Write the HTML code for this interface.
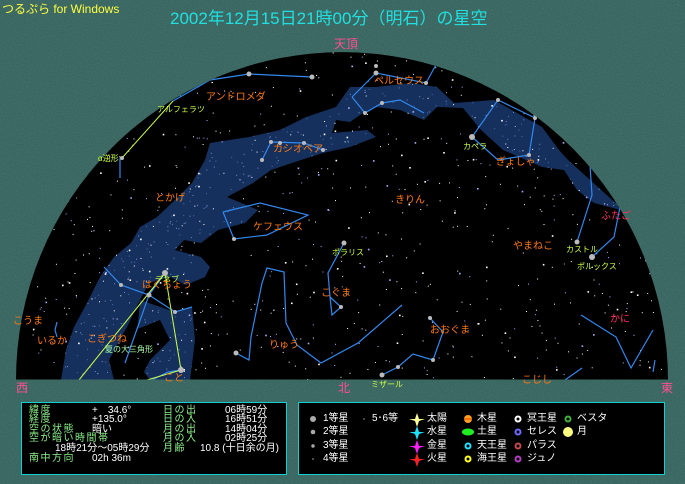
<!DOCTYPE html>
<html><head><meta charset="utf-8">
<style>
html,body{margin:0;padding:0;}
body{width:685px;height:484px;background:#335c54;position:relative;overflow:hidden;font-family:"Liberation Sans","Noto Sans CJK JP",sans-serif;}
.t{position:absolute;white-space:nowrap;line-height:1;}
.panel{position:absolute;background:#000;border:1px solid #10d0d0;box-sizing:border-box;}
.g{color:#8cf08c;letter-spacing:1.5px;}
.w{color:#fff;}
.p{position:absolute;font-size:10px;white-space:nowrap;line-height:1;}
.q{position:absolute;font-size:10px;white-space:nowrap;line-height:1;color:#fff;}
</style></head><body>
<svg width="685" height="484" style="position:absolute;left:0;top:0">
<defs>
<clipPath id="dome"><path d="M16 380 A326 328 0 0 1 668 380 Z"/></clipPath>
<clipPath id="mw"><path id="mwp" d="M620 207 L568 160 L559 150 L542 127 L494 100 L454 103 L437 87 L411 83 L376 87 L350 87 L336 107 L306 117 L280 130 L249 137 L210 143 L205 160 L192 183 L175 200 L157 217 L140 227 L131 243 L114 257 L100 277 L87 303 L74 327 L66 350 L61 380 L114 380 L109 360 L118 343 L127 327 L140 300 L149 283 L170 277 L186 285 L205 277 L210 267 L201 257 L175 250 L184 240 L201 243 L218 230 L245 223 L258 210 L227 197 L253 183 L271 170 L301 160 L323 153 L350 147 L376 137 L367 130 L332 133 L336 120 L350 122 L363 113 L376 107 L400 110 L424 120 L437 107 L463 108 L481 130 L503 150 L542 167 L564 170 L577 190 L594 203 L640 215 Z M140 300 L175 312 L192 307 L195 340 L190 380 L150 380 L135 360 Z"/></clipPath>
<filter id="nz"><feTurbulence type="fractalNoise" baseFrequency="0.9" numOctaves="1" seed="3"/><feColorMatrix values="0 0 0 0 0.15  0 0 0 0 0.38  0 0 0 0 0.42  0 0 0 0.35 0"/></filter>
</defs>
<rect width="685" height="484" filter="url(#nz)"/>
<path d="M16 380 A326 328 0 0 1 668 380 Z" fill="#000"/>
<g clip-path="url(#dome)">
<g clip-path="url(#mw)"><rect x="0" y="0" width="685" height="400" fill="#15305c"/><g id="mwstars"></g></g>
<path fill="#000" d="M135 330 L160 320 L170 340 L150 360 L140 380 L128 380 Z"/>
<g id="stars"></g>
<g stroke="#3388ee" stroke-width="1.2" fill="none">
<polyline points="173,101 210,80 249,74 312,77"/>
<polyline points="120,158 120,178"/>
<polyline points="437,63 426,83 376,73 352,97"/>
<polyline points="352,97 365,113 382,103 400,100 424,113"/>
<polyline points="472,137 498,100 535,118 529,155 498,160 472,137"/>
<polyline points="262,160 271,142 304,143 323,150"/>
<polyline points="223,212 260,203 308,215 267,235 234,239 223,212"/>
<polyline points="344,243 328,273 330,297 332,315 341,307 330,297"/>
<polyline points="236,353 249,360 251,337 262,283 267,268 284,272 286,323 297,345 321,363 358,343 402,305"/>
<polyline points="430,318 443,332 433,360 413,354 398,367 382,375"/>
<polyline points="590,165 592,195 577,242"/>
<polyline points="592,257 614,237 620,207"/>
<polyline points="581,315 616,337 631,368 653,330"/>
<polyline points="104,267 121,285 149,295 175,312 192,307"/>
<polyline points="165,273 149,295 125,363"/>
<polyline points="57,322 55,330 57,337"/>
<polyline points="152,380 168,372 181,370"/>
<polyline points="653,372 655,360"/>
<polyline points="565,380 582,368"/>
</g>
<g stroke="#ccff44" stroke-width="1" fill="none">
<polyline points="173,101 122,158"/>
<polyline points="165,273 181,370"/>
<polyline points="165,273 79,380"/>
<polyline points="181,370 147,380"/>
</g>
<g fill="#bbb">
<circle cx="249" cy="74" r="2.5"/><circle cx="312" cy="77" r="2.5"/><circle cx="376" cy="73" r="2.5"/><circle cx="426" cy="83" r="2"/><circle cx="376" cy="66" r="2"/>
<circle cx="472" cy="137" r="3"/><circle cx="535" cy="118" r="2"/><circle cx="529" cy="155" r="2"/><circle cx="498" cy="100" r="2"/>
<circle cx="262" cy="160" r="2"/><circle cx="271" cy="142" r="2"/><circle cx="280" cy="143" r="2"/><circle cx="304" cy="143" r="2"/><circle cx="323" cy="150" r="2"/>
<circle cx="382" cy="103" r="2"/><circle cx="365" cy="113" r="2"/>
<circle cx="165" cy="273" r="3"/><circle cx="149" cy="295" r="2.5"/><circle cx="181" cy="370" r="3"/><circle cx="121" cy="285" r="2"/><circle cx="175" cy="312" r="2"/>
<circle cx="344" cy="243" r="2.5"/><circle cx="234" cy="239" r="2"/><circle cx="592" cy="257" r="3"/><circle cx="577" cy="242" r="2.5"/>
<circle cx="236" cy="353" r="2.5"/><circle cx="433" cy="360" r="2"/><circle cx="382" cy="375" r="2.5"/><circle cx="398" cy="367" r="2"/><circle cx="430" cy="318" r="2"/>
<circle cx="122" cy="158" r="2"/><circle cx="341" cy="307" r="2"/>
</g>
</g>
<line x1="16" y1="380" x2="668" y2="380" stroke="#3a6a60" stroke-width="1"/>
</svg>
<div class="t" style="left:2px;top:3px;font-size:12px;color:#ffff40">つるぷら for Windows</div>
<div class="t" style="left:170px;top:10px;font-size:17px;color:#20e0e0">2002年12月15日21時00分（明石）の星空</div>
<div class="t" style="left:334px;top:38px;font-size:12px;color:#ff5090">天頂</div>
<div class="t" style="left:16px;top:382px;font-size:12px;color:#ff5090">西</div>
<div class="t" style="left:338px;top:382px;font-size:12px;color:#ff5090">北</div>
<div class="t" style="left:661px;top:382px;font-size:12px;color:#ff5090">東</div>
<div style="position:absolute;left:0;top:0;font-size:10px;color:#ff7a10">
<div class="t" style="left:206px;top:93px">アンドロメダ</div>
<div class="t" style="left:273px;top:145px">カシオペア</div>
<div class="t" style="left:374px;top:77px">ペルセウス</div>
<div class="t" style="left:496px;top:158px">ぎょしゃ</div>
<div class="t" style="left:155px;top:194px">とかげ</div>
<div class="t" style="left:395px;top:196px">きりん</div>
<div class="t" style="left:253px;top:223px">ケフェウス</div>
<div class="t" style="left:513px;top:242px">やまねこ</div>
<div class="t" style="left:601px;top:212px;color:#ff3060">ふたご</div>
<div class="t" style="left:321px;top:289px">こぐま</div>
<div class="t" style="left:142px;top:281px">はくちょう</div>
<div class="t" style="left:13px;top:317px">こうま</div>
<div class="t" style="left:37px;top:337px">いるか</div>
<div class="t" style="left:87px;top:335px">こぎつね</div>
<div class="t" style="left:269px;top:341px">りゅう</div>
<div class="t" style="left:430px;top:326px">おおぐま</div>
<div class="t" style="left:610px;top:315px;color:#ff3060">かに</div>
<div class="t" style="left:164px;top:374px">こと</div>
<div class="t" style="left:522px;top:376px">こじし</div>
</div>
<div style="position:absolute;left:0;top:0;font-size:8px;color:#ccff44">
<div class="t" style="left:157px;top:106px">アルフェラツ</div>
<div class="t" style="left:98px;top:155px">α逆形</div>
<div class="t" style="left:463px;top:143px">カペラ</div>
<div class="t" style="left:332px;top:249px">ポラリス</div>
<div class="t" style="left:566px;top:246px">カストル</div>
<div class="t" style="left:577px;top:263px">ポルックス</div>
<div class="t" style="left:155px;top:276px">デネブ</div>
<div class="t" style="left:105px;top:346px;color:#aaffaa">夏の大三角形</div>
<div class="t" style="left:371px;top:381px">ミザール</div>
</div>

<div class="panel" style="left:21px;top:402px;width:266px;height:73px"></div>
<div class="p g" style="left:29px;top:406px">緯度</div><div class="p w" style="left:92px;top:406px">+　34.6°</div>
<div class="p g" style="left:29px;top:415px">経度</div><div class="p w" style="left:92px;top:415px">+135.0°</div>
<div class="p g" style="left:29px;top:425px">空の状態</div><div class="p w" style="left:92px;top:425px">暗い</div>
<div class="p g" style="left:29px;top:434px">空が暗い時間帯</div>
<div class="p w" style="left:55px;top:444px">18時21分～05時29分</div>
<div class="p g" style="left:29px;top:454px">南中方向</div><div class="p w" style="left:92px;top:454px">02h 36m</div>
<div class="p g" style="left:163px;top:406px">日の出</div><div class="p w" style="left:225px;top:406px">06時59分</div>
<div class="p g" style="left:163px;top:415px">日の入</div><div class="p w" style="left:225px;top:415px">16時51分</div>
<div class="p g" style="left:163px;top:425px">月の出</div><div class="p w" style="left:225px;top:425px">14時04分</div>
<div class="p g" style="left:163px;top:434px">月の入</div><div class="p w" style="left:225px;top:434px">02時25分</div>
<div class="p g" style="left:163px;top:444px">月齢</div><div class="p w" style="left:200px;top:444px">10.8 (十日余の月)</div>

<div class="panel" style="left:298px;top:402px;width:367px;height:73px"></div>
<svg width="685" height="484" style="position:absolute;left:0;top:0">
<g fill="#aaa"><circle cx="313" cy="419" r="3"/><circle cx="313" cy="432" r="2.3"/><circle cx="313" cy="446" r="1.7"/><circle cx="313" cy="459" r="0.8"/><circle cx="364" cy="419" r="0.7"/></g>
<path d="M417 413 L419 419 L425 419 L419 421 L417 427 L415 421 L409 419 L415 419Z" fill="#ffff99"/>
<path d="M417 426 L419 432 L425 432 L419 434 L417 440 L415 434 L409 432 L415 432Z" fill="#20e0ff"/>
<path d="M417 440 L419 446 L425 446 L419 448 L417 454 L415 448 L409 446 L415 446Z" fill="#ff20ff"/>
<path d="M417 453 L419 459 L425 459 L419 461 L417 467 L415 461 L409 459 L415 459Z" fill="#ff2020"/>
<circle cx="468" cy="419" r="4" fill="#ffa020"/><line x1="464" y1="419" x2="472" y2="419" stroke="#e04000"/>
<ellipse cx="468" cy="432" rx="6" ry="3.5" fill="#20ee20"/>
<g fill="none" stroke-width="2"><circle cx="468" cy="446" r="2.5" stroke="#20e0ff"/><circle cx="468" cy="459" r="2.5" stroke="#ffff20"/>
<circle cx="518" cy="419" r="2.5" stroke="#fff"/><circle cx="518" cy="432" r="2.5" stroke="#6a6aff"/><circle cx="518" cy="446" r="2.5" stroke="#c04a4a"/><circle cx="518" cy="459" r="2.5" stroke="#b040c0"/>
<circle cx="568" cy="419" r="2.5" stroke="#40b040"/></g>
<circle cx="568" cy="432" r="5" fill="#ffff80"/>
</svg>
<div class="q" style="left:323px;top:414px">1等星</div><div class="q" style="left:323px;top:427px">2等星</div><div class="q" style="left:323px;top:441px">3等星</div><div class="q" style="left:323px;top:454px">4等星</div>
<div class="q" style="left:372px;top:414px">5･6等</div>
<div class="q" style="left:427px;top:414px">太陽</div><div class="q" style="left:427px;top:427px">水星</div><div class="q" style="left:427px;top:441px">金星</div><div class="q" style="left:427px;top:454px">火星</div>
<div class="q" style="left:477px;top:414px">木星</div><div class="q" style="left:477px;top:427px">土星</div><div class="q" style="left:477px;top:441px">天王星</div><div class="q" style="left:477px;top:454px">海王星</div>
<div class="q" style="left:527px;top:414px">冥王星</div><div class="q" style="left:527px;top:427px">セレス</div><div class="q" style="left:527px;top:441px">パラス</div><div class="q" style="left:527px;top:454px">ジュノ</div>
<div class="q" style="left:577px;top:414px">ベスタ</div><div class="q" style="left:577px;top:427px">月</div>
<script>
(function(){var s=12345;function r(){s=(s*1103515245+12345)%2147483648;return s/2147483648;}
var h='';for(var i=0;i<750;i++){var x=16+r()*652,y=52+r()*328;var c=r()<0.3?'#aab0ff':'#ffffff';var sz=r()<0.85?1:1.6;h+='<rect x="'+x.toFixed(1)+'" y="'+y.toFixed(1)+'" width="'+sz+'" height="'+sz+'" fill="'+c+'"/>';}
document.getElementById('stars').innerHTML=h;
var m='';for(var j=0;j<1500;j++){var x2=50+r()*600,y2=60+r()*320;var c2=r()<0.5?'#4a6fae':'#6f8fcf';m+='<rect x="'+x2.toFixed(1)+'" y="'+y2.toFixed(1)+'" width="1" height="1" fill="'+c2+'"/>';}
document.getElementById('mwstars').innerHTML=m;})();
</script>
</body></html>
